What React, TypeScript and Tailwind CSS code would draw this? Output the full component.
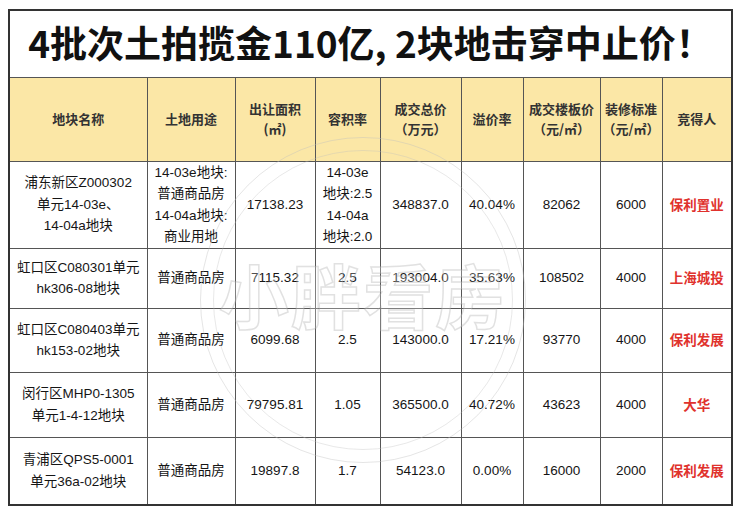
type Row = {
  name: string[];
  use: string[];
  area: string;
  far: string[];
  total: string;
  premium: string;
  floor: string;
  decor: string;
  winner: string;
  h: string;
};

const rows: Row[] = [
  {
    name: ['浦东新区Z000302', '单元14-03e、', '14-04a地块'],
    use: ['14-03e地块:', '普通商品房', '14-04a地块:', '商业用地'],
    area: '17138.23',
    far: ['14-03e', '地块:2.5', '14-04a', '地块:2.0'],
    total: '348837.0',
    premium: '40.04%',
    floor: '82062',
    decor: '6000',
    winner: '保利置业',
    h: 'h-[86px]',
  },
  {
    name: ['虹口区C080301单元', 'hk306-08地块'],
    use: ['普通商品房'],
    area: '7115.32',
    far: ['2.5'],
    total: '193004.0',
    premium: '35.63%',
    floor: '108502',
    decor: '4000',
    winner: '上海城投',
    h: 'h-[60px]',
  },
  {
    name: ['虹口区C080403单元', 'hk153-02地块'],
    use: ['普通商品房'],
    area: '6099.68',
    far: ['2.5'],
    total: '143000.0',
    premium: '17.21%',
    floor: '93770',
    decor: '4000',
    winner: '保利发展',
    h: 'h-[64px]',
  },
  {
    name: ['闵行区MHP0-1305', '单元1-4-12地块'],
    use: ['普通商品房'],
    area: '79795.81',
    far: ['1.05'],
    total: '365500.0',
    premium: '40.72%',
    floor: '43623',
    decor: '4000',
    winner: '大华',
    h: 'h-[65px]',
  },
  {
    name: ['青浦区QPS5-0001', '单元36a-02地块'],
    use: ['普通商品房'],
    area: '19897.8',
    far: ['1.7'],
    total: '54123.0',
    premium: '0.00%',
    floor: '16000',
    decor: '2000',
    winner: '保利发展',
    h: 'h-[68px]',
  },
];

const headers: string[][] = [
  ['地块名称'],
  ['土地用途'],
  ['出让面积', '(㎡)'],
  ['容积率'],
  ['成交总价', '（万元）'],
  ['溢价率'],
  ['成交楼板价', '（元/㎡）'],
  ['装修标准', '（元/㎡）'],
  ['竞得人'],
];

const cell = 'border border-[#555] text-center align-middle p-0';

function Lines({ items }: { items: string[] }) {
  return (
    <>
      {items.map((t, i) => (
        <span key={i} className="block whitespace-nowrap">
          {t}
        </span>
      ))}
    </>
  );
}

export default function App() {
  return (
    <div className="relative w-[740px] h-[515px] bg-white overflow-hidden font-['Liberation_Sans','Noto_Sans_CJK_SC',sans-serif]">
      <div className="pt-[9px] pl-[8px]">
        <table className="table-fixed border-collapse border-2 border-[#333] w-[725px]">
          <colgroup>
            <col className="w-[138px]" />
            <col className="w-[88px]" />
            <col className="w-[80px]" />
            <col className="w-[65px]" />
            <col className="w-[81px]" />
            <col className="w-[62px]" />
            <col className="w-[77px]" />
            <col className="w-[62px]" />
            <col className="w-[70px]" />
          </colgroup>
          <tbody>
            {/* Title */}
            <tr className="h-[67px]">
              <td
                colSpan={9}
                className="border border-[#555] text-center align-middle font-['Noto_Sans_CJK_SC',sans-serif] text-[37px] font-bold text-[#111] leading-none pb-[2px]"
              >
                4批次土拍揽金110亿, 2块地击穿中止价！
              </td>
            </tr>

            {/* Header */}
            <tr className="h-[84px] bg-[#fbe7a6]">
              {headers.map((h, i) => (
                <td
                  key={i}
                  className={`${cell} text-[13px] leading-[20px] font-bold text-[#333] font-['Noto_Sans_CJK_SC',sans-serif]`}
                >
                  <Lines items={h} />
                </td>
              ))}
            </tr>

            {/* Body */}
            {rows.map((r, i) => (
              <tr key={i} className={`${r.h} text-[13.5px] leading-[21.5px] text-[#151515]`}>
                <td className={cell}>
                  <Lines items={r.name} />
                </td>
                <td className={cell}>
                  <Lines items={r.use} />
                </td>
                <td className={cell}>{r.area}</td>
                <td className={cell}>
                  <Lines items={r.far} />
                </td>
                <td className={cell}>{r.total}</td>
                <td className={cell}>{r.premium}</td>
                <td className={cell}>{r.floor}</td>
                <td className={cell}>{r.decor}</td>
                <td className={`${cell} font-bold text-[#e0322d] font-['Noto_Sans_CJK_SC',sans-serif]`}>
                  {r.winner}
                </td>
              </tr>
            ))}
          </tbody>
        </table>
      </div>

      {/* Watermark */}
      <div className="pointer-events-none absolute left-[200px] top-[137px] w-[326px] h-[326px]">
        <div className="absolute inset-0 rounded-full border-[1.5px] border-[#bdbdbd]/40" />
        <div className="absolute inset-[13px] rounded-full border border-[#bdbdbd]/35" />
        <div className="absolute inset-0 flex items-center justify-center pb-[14px]">
          <span className="font-['Noto_Sans_CJK_SC',sans-serif] text-[70px] font-bold tracking-[2px] text-white/25 [-webkit-text-stroke:1.5px_rgba(170,170,170,0.35)] whitespace-nowrap">
            小胖看房
          </span>
        </div>
      </div>
    </div>
  );
}
